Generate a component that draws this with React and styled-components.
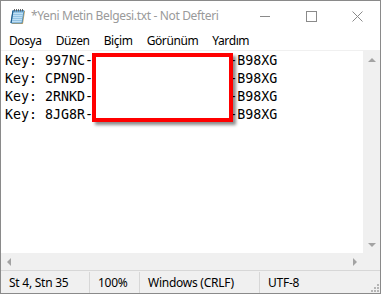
import React from "react";
import styled, { createGlobalStyle } from "styled-components";

const GlobalStyle = createGlobalStyle`
  html, body {
    margin: 0;
    padding: 0;
    width: 381px;
    height: 294px;
    overflow: hidden;
    background: #ffffff;
  }
`;

const uiFont = `"Noto Sans", "Open Sans", sans-serif`;

const Window = styled.div`
  box-sizing: border-box;
  width: 381px;
  height: 294px;
  border: 1px solid #8a8a8a;
  display: flex;
  flex-direction: column;
  background: #ffffff;
  font-family: ${uiFont};
`;

const TitleBar = styled.div`
  height: 30px;
  display: flex;
  align-items: center;
  flex-shrink: 0;
`;

const AppIcon = styled.svg`
  width: 17px;
  height: 17px;
  margin-left: 9px;
`;

const Title = styled.div`
  margin-left: 4px;
  margin-top: -1px;
  font-size: 12px;
  color: #9a9a9a;
  flex: 1;
  white-space: nowrap;
  letter-spacing: -0.35px;
`;

const CaptionButton = styled.div`
  width: 46px;
  height: 30px;
  display: flex;
  align-items: center;
  justify-content: center;
`;

const MenuBar = styled.div`
  height: 19px;
  display: flex;
  align-items: center;
  padding-left: 1px;
  flex-shrink: 0;
  border-bottom: 1px solid #f0f0f0;
`;

const MenuItem = styled.div`
  padding: 1px 7px 0;
  font-size: 12px;
  line-height: 18px;
  color: #000000;
  letter-spacing: -0.4px;
`;

const EditArea = styled.div`
  flex: 1;
  display: grid;
  grid-template-columns: 1fr 17px;
  grid-template-rows: 1fr 17px;
  min-height: 0;
`;

const TextPane = styled.div`
  position: relative;
  background: #ffffff;
  padding: 1px 0 0 4px;
  overflow: hidden;
`;

const Line = styled.div`
  font-family: "DejaVu Sans Mono", "Liberation Mono", monospace;
  font-size: 13.3px;
  line-height: 18px;
  color: #000000;
  white-space: pre;
`;

const Redaction = styled.div`
  position: absolute;
  left: 91px;
  top: 2px;
  width: 141px;
  height: 69px;
  box-sizing: border-box;
  border: 4px solid #ff0000;
  background: #ffffff;
  box-shadow: 3px 3px 3px rgba(0, 0, 0, 0.45);
`;

const ScrollTrack = styled.div`
  background: #f0f0f0;
  display: flex;
  flex-direction: ${(p) => (p.$vertical ? "column" : "row")};
  justify-content: space-between;
  align-items: center;
`;

const ArrowBox = styled.div`
  width: 17px;
  height: 17px;
  display: flex;
  align-items: center;
  justify-content: center;
`;

const Corner = styled.div`
  background: #f0f0f0;
`;

const StatusBar = styled.div`
  height: 22px;
  flex-shrink: 0;
  border-top: 1px solid #d7d7d7;
  background: #f0f0f0;
  display: flex;
  position: relative;
`;

const StatusCell = styled.div`
  width: ${(p) => p.$w}px;
  flex: ${(p) => (p.$w ? "none" : "1")};
  box-sizing: border-box;
  padding-left: 8px;
  font-size: 12px;
  line-height: 22px;
  color: #000000;
  border-left: ${(p) => (p.$first ? "none" : "1px solid #d7d7d7")};
  margin-top: 1px;
  letter-spacing: -0.25px;
  white-space: nowrap;
`;

const Grip = styled.svg`
  position: absolute;
  right: 1px;
  bottom: 1px;
  width: 10px;
  height: 10px;
`;

const NotepadIcon = () => (
  <AppIcon viewBox="0 0 17 17">
    <path d="M4 3 L15 3 L13 16 L2 16 Z" fill="#c9a96a" />
    <path d="M3 2.5 L14 2.5 L12 15 L1 15 Z" fill="#bfe0f5" stroke="#3b7fb0" strokeWidth="0.8" />
    <path d="M3 2.5 L14 2.5 L13.6 4.5 L2.7 4.5 Z" fill="#6aa9d6" />
    {[4, 6, 8, 10, 12].map((x) => (
      <rect key={x} x={x} y="1" width="0.9" height="2.4" fill="#555" />
    ))}
    {[6.5, 8.5, 10.5, 12.5].map((y) => (
      <line key={y} x1={2.5 - (y - 6) * 0.15} y1={y} x2={12.8 - (y - 6) * 0.15} y2={y} stroke="#7fb6dc" strokeWidth="0.7" />
    ))}
    <path d="M3 2.5 L1 15" stroke="#1f5f8f" strokeWidth="1.2" />
  </AppIcon>
);

const Arrow = ({ dir }) => {
  const pts = {
    up: "4,7 8,3 12,7",
    down: "4,3 8,7 12,3",
    left: "6,1 2,5 6,9",
    right: "3,1 7,5 3,9",
  }[dir];
  const vb = dir === "up" || dir === "down" ? "0 0 16 10" : "0 0 10 10";
  return (
    <svg width={dir === "up" || dir === "down" ? 16 : 10} height="10" viewBox={vb}>
      <polygon points={pts} fill="#a3a3a3" />
    </svg>
  );
};

const keys = ["997NC", "CPN9D", "2RNKD", "8JG8R"];

export default function App() {
  return (
    <>
      <GlobalStyle />
      <Window>
        <TitleBar>
          <NotepadIcon />
          <Title>*Yeni Metin Belgesi.txt - Not Defteri</Title>
          <CaptionButton>
            <svg width="10" height="10" viewBox="0 0 10 10">
              <line x1="0" y1="5.5" x2="10" y2="5.5" stroke="#8a8a8a" strokeWidth="1" />
            </svg>
          </CaptionButton>
          <CaptionButton>
            <svg width="11" height="11" viewBox="0 0 11 11">
              <rect x="0.5" y="0.5" width="10" height="10" fill="none" stroke="#8a8a8a" strokeWidth="1" />
            </svg>
          </CaptionButton>
          <CaptionButton>
            <svg width="11" height="11" viewBox="0 0 11 11">
              <path d="M0.5 0.5 L10.5 10.5 M10.5 0.5 L0.5 10.5" stroke="#8a8a8a" strokeWidth="1" />
            </svg>
          </CaptionButton>
        </TitleBar>
        <MenuBar>
          <MenuItem>Dosya</MenuItem>
          <MenuItem>Düzen</MenuItem>
          <MenuItem>Biçim</MenuItem>
          <MenuItem>Görünüm</MenuItem>
          <MenuItem>Yardım</MenuItem>
        </MenuBar>
        <EditArea>
          <TextPane>
            {keys.map((k) => (
              <Line key={k}>{`Key: ${k}-XXXXX-XXXXX-XXXXX-B98XG`}</Line>
            ))}
            <Redaction />
          </TextPane>
          <ScrollTrack $vertical>
            <ArrowBox><Arrow dir="up" /></ArrowBox>
            <ArrowBox><Arrow dir="down" /></ArrowBox>
          </ScrollTrack>
          <ScrollTrack>
            <ArrowBox><Arrow dir="left" /></ArrowBox>
            <ArrowBox><Arrow dir="right" /></ArrowBox>
          </ScrollTrack>
          <Corner />
        </EditArea>
        <StatusBar>
          <StatusCell $first $w={88}>St 4, Stn 35</StatusCell>
          <StatusCell $w={50}>100%</StatusCell>
          <StatusCell $w={120}>Windows (CRLF)</StatusCell>
          <StatusCell>UTF-8</StatusCell>
          <Grip viewBox="0 0 10 10">
            {[
              [8, 2], [8, 5], [5, 5], [8, 8], [5, 8], [2, 8],
            ].map(([x, y]) => (
              <rect key={`${x}-${y}`} x={x} y={y} width="2" height="2" fill="#b5b5b5" />
            ))}
          </Grip>
        </StatusBar>
      </Window>
    </>
  );
}
